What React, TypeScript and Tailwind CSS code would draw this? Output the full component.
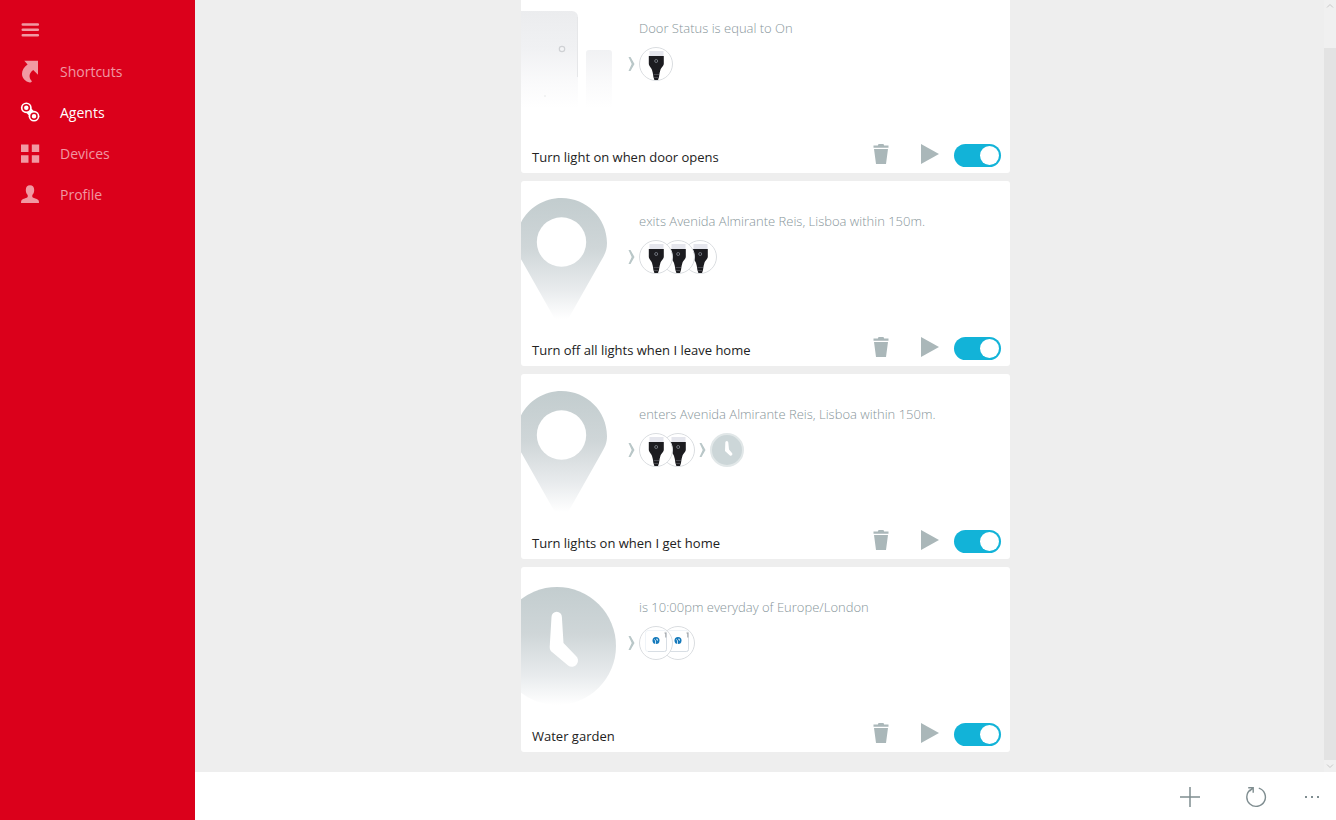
import { useState } from "react";
import type { ReactNode } from "react";

type Art = "door" | "pin" | "clock";
type Device = "bulb" | "tap" | "timer";

const agents: { name: string; trigger: string; art: Art; steps: Device[][] }[] = [
  {
    name: "Turn light on when door opens",
    trigger: "Door Status is equal to On",
    art: "door",
    steps: [["bulb"]],
  },
  {
    name: "Turn off all lights when I leave home",
    trigger: "exits Avenida Almirante Reis, Lisboa within 150m.",
    art: "pin",
    steps: [["bulb", "bulb", "bulb"]],
  },
  {
    name: "Turn lights on when I get home",
    trigger: "enters Avenida Almirante Reis, Lisboa within 150m.",
    art: "pin",
    steps: [["bulb", "bulb"], ["timer"]],
  },
  {
    name: "Water garden",
    trigger: "is 10:00pm everyday of Europe/London",
    art: "clock",
    steps: [["tap", "tap"]],
  },
];

const navItems: { label: string; icon: ReactNode; active?: boolean }[] = [
  {
    label: "Shortcuts",
    icon: (
      <path d="M4.300-1.200H18v13.900l-4.800-4.600c-2.600 2-4 4.400-3.600 6.700.3 2 1.100 3.400 2.400 4.500-.6.900-1.200 1.200-2.300 1.200C5.500 19.600 2 16.300 2 12 2 8.200 4 5 7.600 2.600Z" />
    ),
  },
  {
    label: "Agents",
    active: true,
    icon: (
      <>
        <path d="M6.300 4.800 14 13.200" stroke="currentColor" strokeWidth="6.500" />
        <circle cx="6.300" cy="4.800" r="5.400" />
        <circle cx="14" cy="13.200" r="5.400" />
        <circle cx="6.300" cy="4.800" r="3" stroke="#db001b" strokeWidth="1.500" />
        <circle cx="14" cy="13.200" r="3" stroke="#db001b" strokeWidth="1.500" />
      </>
    ),
  },
  {
    label: "Devices",
    icon: <path d="M1 .500h7.500V8H1zM11.800 .500h7.400V8h-7.400zM1 11.200h7.500v7.500H1zM11.800 11.200h7.400v7.500h-7.400z" />,
  },
  {
    label: "Profile",
    icon: (
      <path d="M10 .300c2.800 0 4.200 2 4.200 4.600 0 2.200-.7 3.800-1.900 5v2.200c.3 1 5.200 1.600 6.200 3.200.4.700.5 1.700.5 2.700H1c0-1 .1-2 .5-2.700 1-1.600 5.900-2.200 6.200-3.200V9.900c-1.200-1.200-1.900-2.800-1.900-5C5.800 2.300 7.200.3 10 .3Z" />
    ),
  },
];

function CardArt({ art, id }: { art: Art; id: string }) {
  return (
    <svg viewBox="0 0 100 150" className="h-[150px] w-[100px] shrink-0" aria-hidden="true">
      <defs>
        <linearGradient id={id} gradientUnits="userSpaceOnUse" x1="0" y1="20" x2="0" y2={art === "door" ? "120" : "138"}>
          <stop offset="0" stopColor={art === "door" ? "#ebecee" : "#c3cdcf"} />
          <stop offset="0.4" stopColor={art === "door" ? "#f0f1f3" : "#cfd6d8"} />
          <stop offset="0.75" stopColor={art === "door" ? "#fafafb" : "#e8ebed"} />
          <stop offset="1" stopColor="#ffffff" />
        </linearGradient>
      </defs>
      {art === "door" && (
        <>
          <path d="M0 23h51a6 6 0 0 1 6 6v94H0Z" fill={`url(#${id})`} />
          <path d="M56.500 29v60" stroke="#e6e7e9" strokeWidth="1" />
          <path d="M65 123V65a3 3 0 0 1 3-3h20a3 3 0 0 1 3 3v58Z" fill={`url(#${id})`} />
          <circle cx="41" cy="61" r="2.700" fill="#f3f4f6" stroke="#cfd1d4" strokeWidth="1.200" />
          <circle cx="24" cy="108" r="0.800" fill="#e4e5e7" />
        </>
      )}
      {art === "pin" && (
        <>
          <path
            d="M40.500 17C65.600 17 86 37 86 62c0 7-2 11-5.500 17L46 140c-3 4-8 4-11 0L.5 79C-3 73-5 69-5 62-5 37 15.400 17 40.500 17Z"
            fill={`url(#${id})`}
          />
          <circle cx="40.500" cy="61" r="24.700" fill="#fff" />
        </>
      )}
      {art === "clock" && (
        <>
          <circle cx="36" cy="79" r="59" fill={`url(#${id})`} />
          <path
            d="M30.500 50a5.200 5.200 0 0 1 10.400 0L42.500 76 54.500 88.500a5.200 5.200 0 0 1-7.400 10L29.800 84Q28.600 82.500 28.700 80Z"
            fill="#fff"
          />
        </>
      )}
    </svg>
  );
}

function DeviceIcon({ device }: { device: Device }) {
  return (
    <svg viewBox="0 0 34 34" className="size-[34px]" aria-hidden="true">
      {device === "timer" ? (
        <>
          <circle cx="17" cy="17" r="16" fill="#ccd6d8" stroke="#e1e7e8" strokeWidth="2" />
          <path d="M15.300 9.500a1.500 1.500 0 0 1 3 0L19 16.500l3.200 3.800a1.600 1.600 0 0 1-2.300 2.100L15 18Z" fill="#fff" />
        </>
      ) : (
        <circle cx="17" cy="17" r="16.500" fill="#fff" stroke="#dadde0" />
      )}
      {device === "bulb" && (
        <>
          <path d="M10.500 4h14v5h-14z" fill="#e5e6ed" />
          <path
            d="M9.800 9h15v7.500c0 3-2.600 3.500-3.400 6.500l-.8 3-.6 4-1 3h-3.600l-1-3-.6-4-.8-3c-.8-3-3.200-3.500-3.200-6.500Z"
            fill="#1c1c20"
          />
          <circle cx="17.200" cy="14" r="1.500" fill="none" stroke="#70747c" />
          <path d="M14.500 27.500h5.500M15.200 30.500h4" stroke="#54545b" strokeWidth="0.800" />
        </>
      )}
      {device === "tap" && (
        <>
          <rect x="6.500" y="4.500" width="21" height="21" rx="2.500" fill="#fff" stroke="#f0f4f8" />
          <path d="M27.500 8v15.500a2 2 0 0 1-2 2H9" fill="none" stroke="#d8dee4" />
          <path d="M25.500 7h2M26.800 7v4.500" stroke="#9b9fa3" />
          <circle cx="17" cy="14.500" r="3.500" fill="#1479bb" />
          <path d="M16.500 18v-3.500l-1.300-1M17 13.200h1.500v1.500" stroke="#d5ebf8" strokeWidth="0.900" fill="none" />
        </>
      )}
    </svg>
  );
}

function Arrow() {
  return (
    <svg viewBox="0 0 7 14" className="h-[14px] w-[7px] shrink-0" aria-hidden="true">
      <path d="M0.500 0h2l4 7-4 7h-2l3.200-7Z" fill="#b9c7c8" />
    </svg>
  );
}

function AgentCard({ agent, id }: { agent: (typeof agents)[number]; id: string }) {
  const [enabled, setEnabled] = useState(true);

  return (
    <article className="shrink-0 overflow-hidden rounded-[3px] bg-white">
      <div className="flex">
        <CardArt art={agent.art} id={id} />
        <div className="flex flex-col gap-[9px] pt-[30px] pl-[7px]">
          <p className="pl-[11px] text-[13px] leading-5 font-light whitespace-nowrap text-[#87959a]">{agent.trigger}</p>
          <div className="flex items-center gap-1">
            {agent.steps.map((devices, s) => (
              <div key={s} className="flex items-center gap-1">
                <Arrow />
                <div className="isolate flex -space-x-3">
                  {devices.map((device, i) => (
                    <span key={i} className="relative" style={{ zIndex: devices.length - i }}>
                      <DeviceIcon device={device} />
                    </span>
                  ))}
                </div>
              </div>
            ))}
          </div>
        </div>
      </div>
      <div className="flex h-[35px] items-center pr-[9px] pb-[3px] pl-[11px]">
        <label htmlFor={`${id}-on`} className="mr-auto pt-1.5 text-[13px] leading-5 text-[#222]">
          {agent.name}
        </label>
        <button aria-label="Delete" className="mr-8 text-[#aab7b9]">
          <svg viewBox="0 0 16 20" className="h-5 w-4" fill="currentColor">
            <path d="M5.500 0h5l.6 1.500h4.400v2.200H.5V1.500h4.400ZM1 5h14l-2 15H3Z" />
          </svg>
        </button>
        <button aria-label="Run" className="mr-[15px] text-[#aab7b9]">
          <svg viewBox="0 0 18 20" className="h-5 w-[18px]" fill="currentColor">
            <path d="M0 0l18 10L0 20Z" />
          </svg>
        </button>
        <input
          id={`${id}-on`}
          type="checkbox"
          checked={enabled}
          onChange={() => setEnabled(!enabled)}
          className="mt-[3px] flex h-[23px] w-[47px] appearance-none items-center rounded-full bg-[#aab7b9] px-[2px] before:size-[19px] before:rounded-full before:bg-white checked:justify-end checked:bg-[#12b3d8]"
        />
      </div>
    </article>
  );
}

export default function App() {
  return (
    <div className="flex h-screen overflow-hidden bg-[#eee] font-['Open_Sans','Noto_Sans',sans-serif]">
      <nav className="w-[195px] shrink-0 bg-[#db001b] pt-[10px] text-white/60">
        <button aria-label="Menu" className="flex h-[41px] items-center px-5">
          <svg viewBox="0 0 20 20" className="size-5" stroke="currentColor" strokeWidth="2.600" strokeLinecap="round">
            <path d="M2.800 3.500h15M2.800 8.800h15M2.800 14.200h15" />
          </svg>
        </button>
        {navItems.map((item) => (
          <a
            key={item.label}
            href="#"
            className={`flex h-[41px] items-center gap-5 px-5 text-[14px] ${item.active ? "text-white" : ""}`}
          >
            <svg viewBox="0 0 20 20" className="size-5 overflow-visible" fill="currentColor" aria-hidden="true">
              {item.icon}
            </svg>
            {item.label}
          </a>
        ))}
      </nav>

      <div className="flex min-w-0 flex-1 flex-col">
        <div className="relative min-h-0 flex-1">
          {/* reversed column so the list opens at its end */}
          <main className="flex h-full flex-col-reverse overflow-y-auto [scrollbar-width:none]">
            <div className="mx-auto flex w-full max-w-[489px] flex-col gap-2 pb-5">
              {agents.map((agent, i) => (
                <AgentCard key={agent.name} agent={agent} id={`agent-${i}`} />
              ))}
            </div>
          </main>

          {/* Scrollbar */}
          <div className="absolute inset-y-0 right-0 flex w-3 flex-col items-center bg-[#f0f0f0] text-[#c8c8c8]" aria-hidden="true">
            <svg viewBox="0 0 12 12" className="mb-9 size-3" fill="none" stroke="currentColor">
              <path d="M3 7.500l3-3 3 3" />
            </svg>
            <div className="w-full flex-1 bg-[#e3e3e3]" />
            <svg viewBox="0 0 12 12" className="size-3" fill="none" stroke="currentColor">
              <path d="M3 4.500l3 3 3-3" />
            </svg>
          </div>
        </div>

        <footer className="flex h-12 shrink-0 items-center justify-end bg-white pt-px pr-4 text-[#7f8d90]">
          <button aria-label="Add" className="mr-[45px]">
            <svg viewBox="0 0 20 20" className="size-5" fill="none" stroke="currentColor" strokeWidth="1.500">
              <path d="M10 0v20M0 10h20" />
            </svg>
          </button>
          <button aria-label="Refresh" className="mr-[37px]">
            <svg viewBox="0 0 22 22" className="size-[22px]" fill="none" stroke="currentColor" strokeWidth="1.400">
              <path d="M13.800 2.200a9.300 9.300 0 1 1-8.200 1.400M3.200 1.800h5v5M8.200 1.800 4.500 5.200" />
            </svg>
          </button>
          <button aria-label="More">
            <svg viewBox="0 0 16 16" className="size-4" fill="currentColor">
              <path d="M1 7h2v2H1zM7 7h2v2H7zM13 7h2v2h-2z" />
            </svg>
          </button>
        </footer>
      </div>
    </div>
  );
}
